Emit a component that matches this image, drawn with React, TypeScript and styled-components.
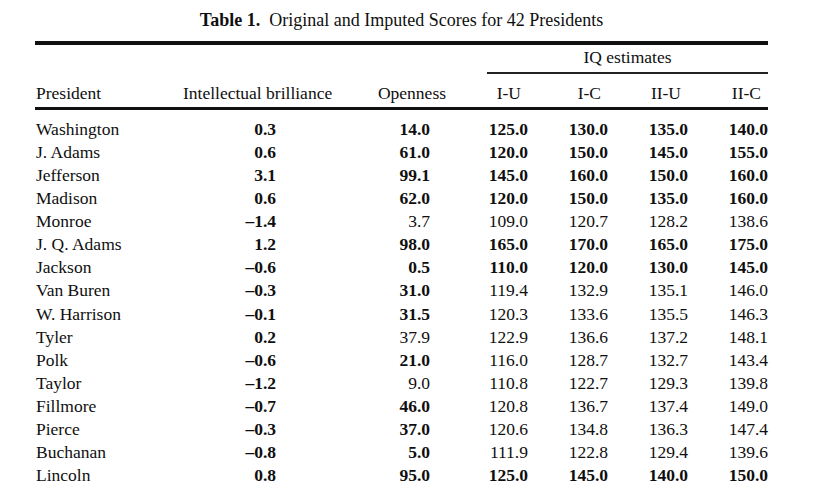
import styled, { createGlobalStyle } from "styled-components";

const GlobalStyle = createGlobalStyle`
  html, body {
    margin: 0;
    padding: 0;
    background: #ffffff;
  }
  body {
    font-family: "Liberation Serif", "Times New Roman", serif;
    color: #0f0f0f;
  }
`;

const COLS = "135px 180px 98px 80px 80px 80px 80px";

// right padding of the value cells, one per column
const VALUE_PAD = [0, 74, 18, 0, 0, 0, 0];

type President = {
  name: string;
  brilliance: string;
  openness: string;
  openBold: boolean;
  iq: string[];
  iqBold: boolean;
};

const rows: President[] = [
  { name: "Washington", brilliance: "0.3", openness: "14.0", openBold: true, iq: ["125.0", "130.0", "135.0", "140.0"], iqBold: true },
  { name: "J. Adams", brilliance: "0.6", openness: "61.0", openBold: true, iq: ["120.0", "150.0", "145.0", "155.0"], iqBold: true },
  { name: "Jefferson", brilliance: "3.1", openness: "99.1", openBold: true, iq: ["145.0", "160.0", "150.0", "160.0"], iqBold: true },
  { name: "Madison", brilliance: "0.6", openness: "62.0", openBold: true, iq: ["120.0", "150.0", "135.0", "160.0"], iqBold: true },
  { name: "Monroe", brilliance: "–1.4", openness: "3.7", openBold: false, iq: ["109.0", "120.7", "128.2", "138.6"], iqBold: false },
  { name: "J. Q. Adams", brilliance: "1.2", openness: "98.0", openBold: true, iq: ["165.0", "170.0", "165.0", "175.0"], iqBold: true },
  { name: "Jackson", brilliance: "–0.6", openness: "0.5", openBold: true, iq: ["110.0", "120.0", "130.0", "145.0"], iqBold: true },
  { name: "Van Buren", brilliance: "–0.3", openness: "31.0", openBold: true, iq: ["119.4", "132.9", "135.1", "146.0"], iqBold: false },
  { name: "W. Harrison", brilliance: "–0.1", openness: "31.5", openBold: true, iq: ["120.3", "133.6", "135.5", "146.3"], iqBold: false },
  { name: "Tyler", brilliance: "0.2", openness: "37.9", openBold: false, iq: ["122.9", "136.6", "137.2", "148.1"], iqBold: false },
  { name: "Polk", brilliance: "–0.6", openness: "21.0", openBold: true, iq: ["116.0", "128.7", "132.7", "143.4"], iqBold: false },
  { name: "Taylor", brilliance: "–1.2", openness: "9.0", openBold: false, iq: ["110.8", "122.7", "129.3", "139.8"], iqBold: false },
  { name: "Fillmore", brilliance: "–0.7", openness: "46.0", openBold: true, iq: ["120.8", "136.7", "137.4", "149.0"], iqBold: false },
  { name: "Pierce", brilliance: "–0.3", openness: "37.0", openBold: true, iq: ["120.6", "134.8", "136.3", "147.4"], iqBold: false },
  { name: "Buchanan", brilliance: "–0.8", openness: "5.0", openBold: true, iq: ["111.9", "122.8", "129.4", "139.6"], iqBold: false },
  { name: "Lincoln", brilliance: "0.8", openness: "95.0", openBold: true, iq: ["125.0", "145.0", "140.0", "150.0"], iqBold: true },
];

const Page = styled.div`
  width: 733px;
  padding-left: 35px;
  font-size: 17.5px;
`;

const Caption = styled.div`
  margin-top: 10px;
  height: 20px;
  line-height: 20px;
  font-size: 18px;
  text-align: center;
  white-space: nowrap;

  b {
    font-weight: 700;
    margin-right: 9px;
  }
`;

const TopRule = styled.div`
  margin-top: 11px;
  height: 4px;
  background: #111;
`;

const SpannerRow = styled.div`
  display: grid;
  grid-template-columns: ${COLS};
  margin-top: 2px;
`;

const Spanner = styled.div`
  grid-column: 4 / span 4;
  margin-left: 39px;
  line-height: 20px;
  padding-bottom: 5px;
  text-align: center;
  border-bottom: 2px solid #222;
`;

const HeaderRow = styled.div`
  display: grid;
  grid-template-columns: ${COLS};
  margin-top: 9px;
  line-height: 20px;
  padding-bottom: 4px;
  border-bottom: 3px solid #111;
`;

const HeadCell = styled.div<{ $align: "left" | "right"; $padL?: number; $padR?: number }>`
  text-align: ${(p) => p.$align};
  padding-left: ${(p) => p.$padL ?? 0}px;
  padding-right: ${(p) => p.$padR ?? 0}px;
  white-space: nowrap;
`;

const Body = styled.div`
  margin-top: 7.5px;
`;

const Row = styled.div`
  display: grid;
  grid-template-columns: ${COLS};
  height: 23.13px;
  line-height: 23.13px;
`;

const NameCell = styled.div`
  padding-left: 1px;
  white-space: nowrap;
`;

const ValueCell = styled.div<{ $bold: boolean; $pad: number }>`
  text-align: right;
  padding-right: ${(p) => p.$pad}px;
  font-weight: ${(p) => (p.$bold ? 700 : 400)};
  white-space: nowrap;
`;

const App = () => {
  return (
    <>
      <GlobalStyle />
      <Page>
        <Caption>
          <b>Table 1.</b>Original and Imputed Scores for 42 Presidents
        </Caption>
        <TopRule />
        <SpannerRow>
          <Spanner>IQ estimates</Spanner>
        </SpannerRow>
        <HeaderRow>
          <HeadCell $align="left" $padL={1}>President</HeadCell>
          <HeadCell $align="left" $padL={13}>Intellectual brilliance</HeadCell>
          <HeadCell $align="right" $padR={2}>Openness</HeadCell>
          <HeadCell $align="right" $padR={7}>I-U</HeadCell>
          <HeadCell $align="right" $padR={7}>I-C</HeadCell>
          <HeadCell $align="right" $padR={7}>II-U</HeadCell>
          <HeadCell $align="right" $padR={7}>II-C</HeadCell>
        </HeaderRow>
        <Body>
          {rows.map((r) => (
            <Row key={r.name}>
              <NameCell>{r.name}</NameCell>
              <ValueCell $bold $pad={VALUE_PAD[1]}>{r.brilliance}</ValueCell>
              <ValueCell $bold={r.openBold} $pad={VALUE_PAD[2]}>{r.openness}</ValueCell>
              {r.iq.map((v, i) => (
                <ValueCell key={i} $bold={r.iqBold} $pad={VALUE_PAD[3 + i]}>
                  {v}
                </ValueCell>
              ))}
            </Row>
          ))}
        </Body>
      </Page>
    </>
  );
};

export default App;
